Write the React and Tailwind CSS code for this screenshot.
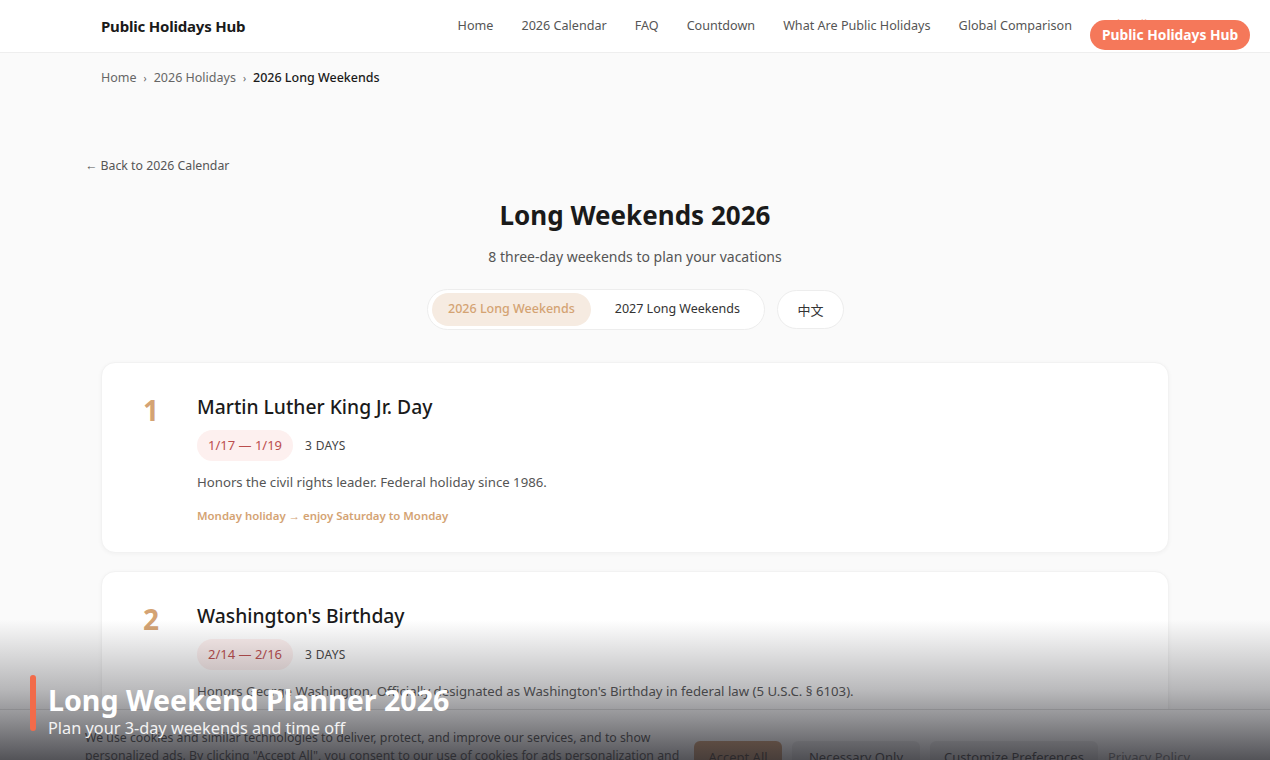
import React from "react";

const font = { fontFamily: '"Noto Sans", "Open Sans", sans-serif' };

function Card({ n, title, range, desc, note }) {
  return (
    <div className="bg-white rounded-[14px] shadow-[0_1px_4px_rgba(0,0,0,0.04)] border border-[#f2f2f2] pl-[41px] pr-10 pt-[30px] pb-[28px] flex">
      <div className="w-[54px] shrink-0 text-[28px] leading-[32px] font-bold text-[#d4a373] pt-[1px]">{n}</div>
      <div className="flex flex-col">
        <div className="text-[19.3px] leading-[28px] font-medium text-[#1a1a1a]">{title}</div>
        <div className="flex items-center gap-3 mt-[9px]">
          <span className="bg-[#fdf0ef] text-[#bb4d4d] text-[13px] rounded-full px-[11px] h-[31px] flex items-center">{range}</span>
          <span className="text-[12px] text-[#444] tracking-[0.3px]">3 DAYS</span>
        </div>
        <div className="text-[13.2px] text-[#555] mt-[11px] leading-[20px]">{desc}</div>
        {note && <div className="text-[11.4px] font-semibold text-[#d4a373] mt-[16px] leading-[16px]">{note}</div>}
      </div>
    </div>
  );
}

export default function App() {
  const nav = ["Home", "2026 Calendar", "FAQ", "Countdown", "What Are Public Holidays", "Global Comparison"];
  return (
    <div className="relative w-[1270px] h-[760px] overflow-hidden bg-[#fafafa]" style={font}>
      {/* header */}
      <header className="relative h-[53px] bg-white border-b border-[#eeeeee] flex items-center pl-[101px] pr-[198px]">
        <div className="text-[15px] font-bold text-[#1a1a1a] tracking-[-0.2px] pt-[1px]">Public Holidays Hub</div>
        <nav className="ml-auto flex items-center gap-[28px] text-[12.6px] text-[#555] pt-[1px]">
          {nav.map((t) => (
            <span key={t}>{t}</span>
          ))}
        </nav>
        <span className="absolute left-[1103px] top-[16px] text-[#f3b4a4] text-[12px]">Subscribe</span>
      </header>

      {/* breadcrumb */}
      <div className="pl-[101px] pt-[16px] flex items-center gap-[7px] text-[12.5px] text-[#666]">
        <span>Home</span>
        <span className="text-[10px]">›</span>
        <span>2026 Holidays</span>
        <span className="text-[10px]">›</span>
        <span className="text-[#1a1a1a] font-medium">2026 Long Weekends</span>
      </div>

      <div className="pl-[85px] mt-[69px] text-[12.3px] text-[#555]">← Back to 2026 Calendar</div>

      <div className="flex flex-col items-center mt-[23px]">
        <h1 className="text-[26px] font-bold text-[#1a1a1a] leading-[34px]">Long Weekends 2026</h1>
        <p className="text-[14px] text-[#555] mt-[15px] leading-[20px]">8 three-day weekends to plan your vacations</p>
        <div className="flex items-center gap-[12px] mt-[22px] pl-[1px]">
          <div className="flex items-center bg-white border border-[#ededed] rounded-full p-[4px] h-[41px]">
            <span className="h-[33px] px-4 rounded-full bg-[#f6ebe1] text-[#d4a373] text-[12.5px] flex items-center font-medium">2026 Long Weekends</span>
            <span className="h-[33px] pl-6 pr-5 text-[12.5px] text-[#333] flex items-center">2027 Long Weekends</span>
          </div>
          <span className="h-[39px] w-[67px] bg-white border border-[#ededed] rounded-full text-[13px] text-[#333] flex items-center justify-center" style={{ fontFamily: '"Noto Sans CJK SC", sans-serif' }}>中文</span>
        </div>
      </div>

      <div className="mx-[101px] mt-[32px] flex flex-col gap-[18px]">
        <Card n="1" title="Martin Luther King Jr. Day" range="1/17 — 1/19" desc="Honors the civil rights leader. Federal holiday since 1986." note="Monday holiday → enjoy Saturday to Monday" />
        <Card n="2" title="Washington's Birthday" range="2/14 — 2/16" desc="Honors George Washington. Officially designated as Washington's Birthday in federal law (5 U.S.C. § 6103)." note="Monday holiday → enjoy Saturday to Monday" />
      </div>

      {/* cookie banner */}
      <div className="absolute left-0 right-0 top-[709px] bottom-0 bg-white border-t border-[#e0e0e0] flex pl-[85px] pt-[19px] gap-[10px]">
        <p className="w-[598px] shrink-0 text-[12.3px] leading-[18px] text-[#444]">
          We use cookies and similar technologies to deliver, protect, and improve our services, and to show personalized ads. By clicking "Accept All", you consent to our use of cookies for ads personalization and analytics.
        </p>
        <div className="flex items-start gap-[10px] pt-[12px] ml-[1px]">
          <span className="h-[34px] w-[88px] rounded-md bg-[#c8956b] text-[#3a2a1e] text-[13px] flex items-center justify-center">Accept All</span>
          <span className="h-[34px] w-[128px] rounded-md bg-[#ececec] text-[#333] text-[13px] flex items-center justify-center">Necessary Only</span>
          <span className="h-[34px] w-[168px] rounded-md bg-[#ececec] text-[#333] text-[13px] flex items-center justify-center">Customize Preferences</span>
          <span className="h-[34px] text-[13px] text-[#777] flex items-center">Privacy Policy</span>
        </div>
      </div>

      {/* dark gradient overlay */}
      <div className="absolute left-0 right-0 bottom-0 h-[140px] bg-gradient-to-b from-[rgba(40,40,46,0)] via-[rgba(40,40,46,0.32)] to-[rgba(40,40,46,0.8)] pointer-events-none" />

      {/* overlay title */}
      <div className="absolute left-[30px] top-[675px] w-[6px] h-[56px] rounded-full bg-[#f26b4a]" />
      <div className="absolute left-[48px] top-[682px] flex flex-col">
        <div className="text-[28.6px] leading-[36px] font-bold text-white">Long Weekend Planner 2026</div>
        <div className="text-[16.3px] leading-[21px] text-white/90">Plan your 3-day weekends and time off</div>
      </div>

      {/* badge */}
      <div className="absolute left-[1090px] top-[20px] h-[30px] px-3 rounded-full bg-[#f5785a] text-white text-[13.8px] font-bold flex items-center">Public Holidays Hub</div>
    </div>
  );
}
